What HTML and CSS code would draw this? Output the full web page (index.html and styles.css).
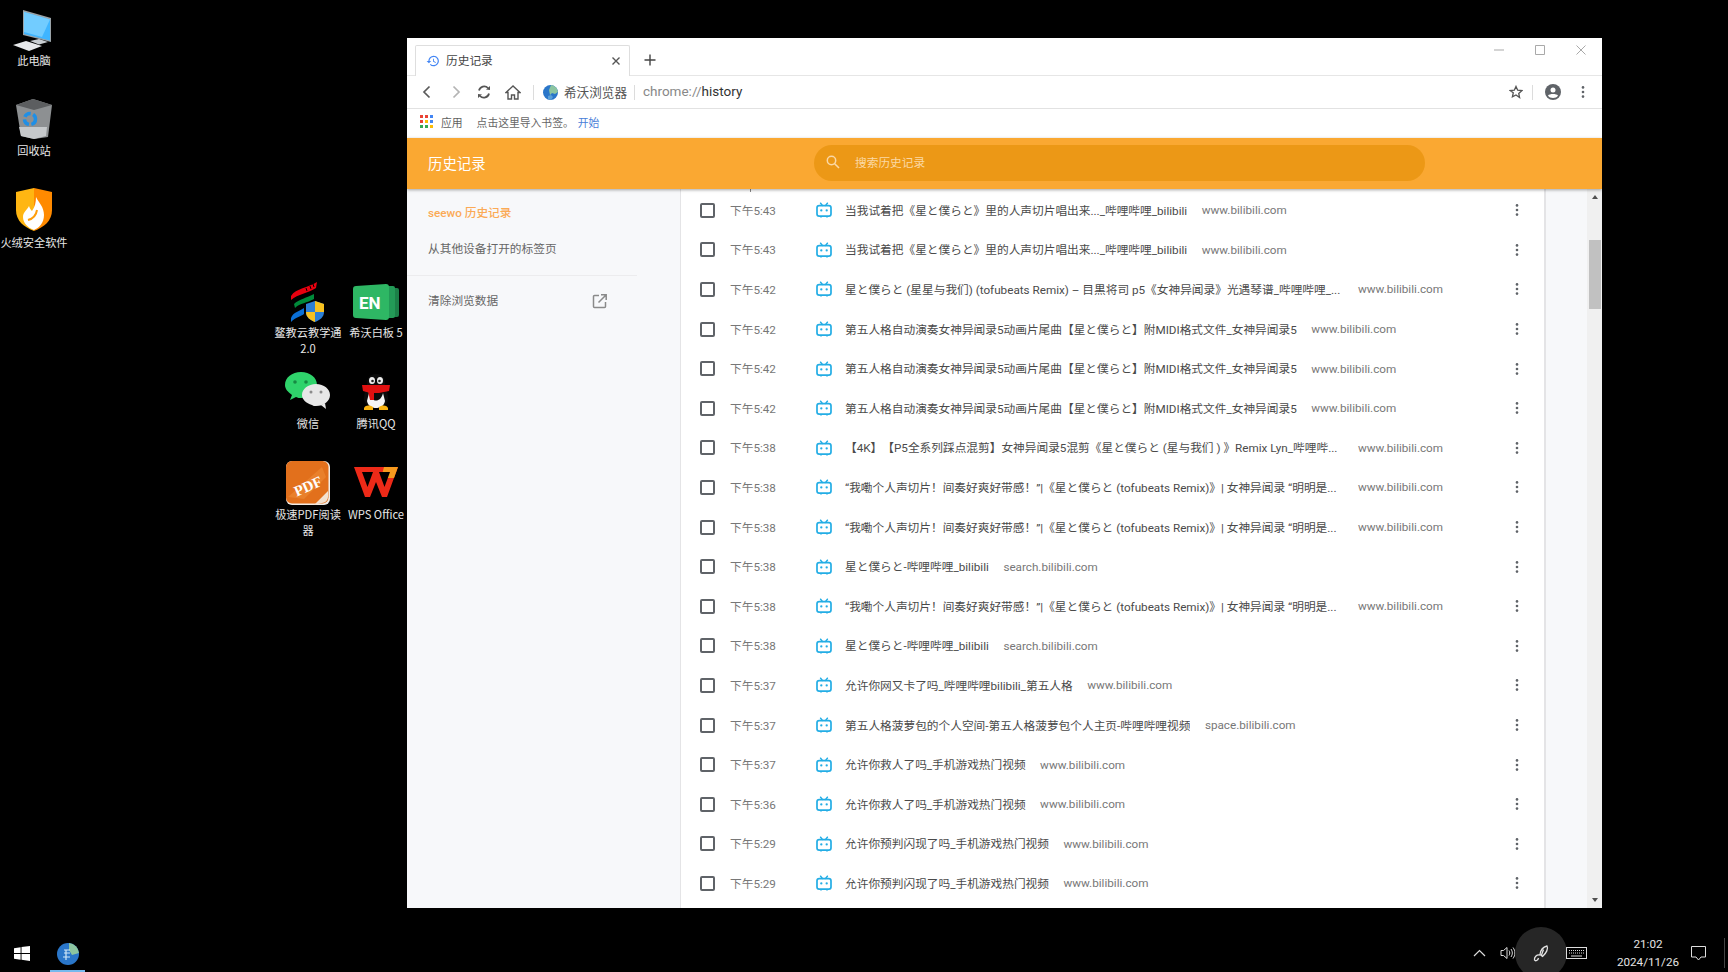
FILE: index.html
```html
<!DOCTYPE html>
<html lang="zh-CN">
<head>
<meta charset="utf-8">
<title>历史记录</title>
<link rel="stylesheet" href="styles.css">
</head>
<body>
<svg class="defs" width="0" height="0" aria-hidden="true">
  <symbol id="bili" viewBox="0 0 16 16">
    <path d="M4.6 1.2 6.4 3.4M11.4 1.2 9.6 3.4" stroke="#23ade5" stroke-width="1.5" stroke-linecap="round" fill="none"/>
    <rect x="1" y="3.6" width="14" height="10.6" rx="2.2" fill="none" stroke="#23ade5" stroke-width="1.7"/>
    <circle cx="5.3" cy="8.4" r="1.15" fill="#23ade5"/><circle cx="10.7" cy="8.4" r="1.15" fill="#23ade5"/>
    <path d="M4.2 15h1.6M10.2 15h1.6" stroke="#23ade5" stroke-width="1.2"/>
  </symbol>
  <symbol id="dots" viewBox="0 0 4 14">
    <circle cx="2" cy="2.4" r="1.3" fill="#5f6368"/><circle cx="2" cy="7" r="1.3" fill="#5f6368"/><circle cx="2" cy="11.6" r="1.3" fill="#5f6368"/>
  </symbol>
</svg>

<main class="desktop">
  <div class="dicon d-pc">
    <svg class="dsvg" width="44" height="42" viewBox="0 0 44 42"><path d="M11 0 39 8v24l-28-7z" fill="#9aa3a8"/><path d="M12 2 38 9.500v21l-26-6.500z" fill="#3fb5ff"/><path d="M12 2 38 9.500 30 27 12 22z" fill="#72ccff"/><path d="M18 31l9-2 9 3-9 2.500z" fill="#c9ced2"/><path d="M1 35l13-4 16 5-13 5z" fill="#e6e8ea"/></svg>
    <span class="dlabel l-pc">此电脑</span>
  </div>
  <div class="dicon d-bin">
    <svg class="dsvg" width="38" height="40" viewBox="0 0 38 40"><path d="M1 6l17-6 19 6-4 32-14 2-13-3z" fill="#8d9092"/><path d="M1 6l17-6 19 6-18 5z" fill="#5c5e60"/><path d="M4 28l28 0-1 9-12 3-13-3z" fill="#c6c9cb"/><circle cx="15" cy="20" r="5.500" fill="none" stroke="#1f8fe6" stroke-width="3.500" stroke-dasharray="7 2.500"/></svg>
    <span class="dlabel l-bin">回收站</span>
  </div>
  <div class="dicon d-fire">
    <svg class="dsvg" width="38" height="44" viewBox="0 0 38 44"><path d="M1 4 19 0v43C9 39 1 33 1 22z" fill="#ffb612"/><path d="M19 0 37 4v18c0 11-8 17-18 21z" fill="#ff8a00"/><path d="M21 9c3 6 8 10 8 18 0 8-5 13-10 15-6-2-11-7-11-13 0-5 4-7 6-11 1 3 2 4 3 5 3-4 4-9 4-14z" fill="#fff"/><path d="M13 32c4-1 8-4 9-10" stroke="#ff9d0a" stroke-width="2" fill="none"/></svg>
    <span class="dlabel l-fire">火绒安全软件</span>
  </div>
  <div class="dicon d-ao">
    <svg class="dsvg" width="36" height="40" viewBox="0 0 36 40"><path d="M1 14C6 6 18 6 27 0l-1 6C18 11 8 12 1 18z" fill="#e8000f"/><path d="M16 6l1 3M20 4l1 3M23 2l1 3" stroke="#000" stroke-width="1"/><path d="M4 22c5-5 13-6 20-10v5c-7 4-14 4-19 9z" fill="#008a3a"/><path d="M1 36c2-6 9-7 13-10v6c-4 3-8 3-13 8z" fill="#0a6fd6"/><path d="M16 22l9-3 9 3v8c0 5-4 8-9 10-5-2-9-5-9-10z" fill="#2d7fd6"/><path d="M25 19l9 3v8h-9zM16 30h9v10c-5-2-9-5-9-10z" fill="#f7c11f"/></svg>
    <span class="dlabel l-ao">鳌教云教学通<br>2.0</span>
  </div>
  <div class="dicon d-en">
    <svg class="dsvg" width="46" height="36" viewBox="0 0 46 36"><rect x="30" y="4" width="16" height="29" rx="2" fill="#1c7f48"/><rect x="26" y="2" width="16" height="32" rx="2" fill="#239a57"/><path d="M3 2 33 0a3 3 0 0 1 3 3v30a3 3 0 0 1-3 3L3 34a3 3 0 0 1-3-3V5a3 3 0 0 1 3-3z" fill="#2eb764"/><text x="6" y="25" class="entext">EN</text></svg>
    <span class="dlabel l-en">希沃白板 5</span>
  </div>
  <div class="dicon d-wx">
    <svg class="dsvg" width="46" height="38" viewBox="0 0 46 38"><path d="M16 0c9 0 16 5.500 16 13s-7 13-16 13c-2 0-3 0-5-1l-6 3 2-5C3 20 0 17 0 13 0 5.500 7 0 16 0z" fill="#2fd36b"/><circle cx="10" cy="10" r="1.800" fill="#178a43"/><circle cx="21" cy="10" r="1.800" fill="#178a43"/><path d="M31 12c8 0 14 5 14 11s-6 11-14 11c-1.500 0-3 0-4-1l-0 0c-6-2-10-5.500-10-10 0-6 6-11 14-11z" fill="#e7e7e7"/><path d="M36 33l5 4-1-6z" fill="#e7e7e7"/><circle cx="26" cy="20" r="1.500" fill="#8b8b8b"/><circle cx="36" cy="20" r="1.500" fill="#8b8b8b"/></svg>
    <span class="dlabel l-wx">微信</span>
  </div>
  <div class="dicon d-qq">
    <svg class="dsvg" width="30" height="36" viewBox="0 0 30 36"><path d="M15 0c6 0 9 4 9 10 0 2 1 3 2 6l1 8c0 6-5 10-12 10S3 30 3 24l1-8c1-3 2-4 2-6 0-6 3-10 9-10z" fill="#0b0b0b"/><path d="M8 19c2 10 12 10 14 0l2 8c-1 5-5 7-9 7s-8-2-9-7z" fill="#f5f5f5"/><ellipse cx="11" cy="6.500" rx="3" ry="3.500" fill="#eee"/><ellipse cx="19" cy="6.500" rx="3" ry="3.500" fill="#eee"/><circle cx="11.500" cy="7" r="1.300" fill="#222"/><circle cx="18.500" cy="7" r="1.300" fill="#222"/><path d="M1 11h28l-1 6-10 2H9L2 17z" fill="#e01010"/><path d="M7 17h6v9H9z" fill="#e01010"/><path d="M3 34c2-3 5-3 9-1v3H3zM27 34c-2-3-5-3-9-1v3h9z" fill="#f9b310"/></svg>
    <span class="dlabel l-qq">腾讯QQ</span>
  </div>
  <div class="dicon d-pdf">
    <svg class="dsvg" width="44" height="44" viewBox="0 0 44 44"><rect width="44" height="44" rx="6" fill="#f1ece6"/><rect width="42.500" height="42.500" rx="6" fill="#e2701c"/><path d="M28 44l14-14v6a6 6 0 0 1-6 6z" fill="#f3e1cf"/><path d="M2 36 36 6l4 10-22 22z" fill="#f08f3a" opacity=".5"/><text x="6" y="30" class="pdftext" transform="rotate(-24 22 22)">PDF</text></svg>
    <span class="dlabel l-pdf">极速PDF阅读<br>器</span>
  </div>
  <div class="dicon d-wps">
    <svg class="dsvg" width="44" height="32" viewBox="0 0 44 32"><path d="M0 0h44L33 30h-5L22 15l-6 15h-5z" fill="#ee2a18"/><path d="M30 0h14l-4 11H27z" fill="#f79a1e"/><path d="M8 5h11l-5.500 15zM25 5h11l-5.500 15z" fill="#000"/></svg>
    <span class="dlabel l-wps">WPS Office</span>
  </div>

  <section class="window">
    <header class="tabstrip">
      <div class="tab">
        <svg class="tab-ico" width="14" height="14" viewBox="0 0 24 24"><path d="M13 3a9 9 0 0 0-9 9H1l4 4 4-4H6a7 7 0 1 1 2.100 5L6.700 18.400A9 9 0 1 0 13 3zm-1 5v5l4.300 2.500.7-1.200-3.500-2.100V8z" fill="#4285f4"/></svg>
        <span class="tab-title">历史记录</span>
        <svg class="tab-close" width="10" height="10" viewBox="0 0 10 10"><path d="M1.500 1.500l7 7m0-7-7 7" stroke="#555" stroke-width="1.400"/></svg>
      </div>
      <svg class="newtab" width="12" height="12" viewBox="0 0 12 12"><path d="M6 .5v11M.5 6h11" stroke="#444" stroke-width="1.400"/></svg>
      <div class="winctl">
        <svg width="10" height="10" viewBox="0 0 10 10"><path d="M0 5h10" stroke="#a9a9a9"/></svg>
        <svg width="10" height="10" viewBox="0 0 10 10"><path d="M.5.500h9v9h-9z" fill="none" stroke="#a9a9a9"/></svg>
        <svg width="10" height="10" viewBox="0 0 10 10"><path d="M.5.500l9 9m0-9-9 9" stroke="#a9a9a9"/></svg>
      </div>
    </header>

    <nav class="toolbar">
      <svg class="tb-back" width="9" height="14" viewBox="0 0 9 14"><path d="M7.500 1.500 2 7l5.500 5.500" fill="none" stroke="#5a5a5a" stroke-width="1.700"/></svg>
      <svg class="tb-fwd" width="9" height="14" viewBox="0 0 9 14"><path d="M1.500 1.500 7 7l-5.500 5.500" fill="none" stroke="#b4b4b4" stroke-width="1.700"/></svg>
      <svg class="tb-reload" width="14" height="14" viewBox="0 0 14 14"><path d="M2 5.500A5.300 5.300 0 0 1 11 3M12 8.500A5.300 5.300 0 0 1 3 11" fill="none" stroke="#555" stroke-width="1.800"/><path d="M9 4.500 13 1v4zM5 9.500 1 13V9z" fill="#555"/></svg>
      <svg class="tb-home" width="16" height="15" viewBox="0 0 16 15"><path d="M8 1 1 7.500h2V14h3.500v-4h3v4H13V7.500h2z" fill="none" stroke="#555" stroke-width="1.400"/></svg>
      <i class="vline v1"></i>
      <svg class="tb-globe" width="15" height="15" viewBox="0 0 15 15"><circle cx="7.500" cy="7.500" r="7.500" fill="#2a76c9"/><path d="M8 0a7.500 7.500 0 0 1 7 7l-3 2-3-1-2 2-1-5z" fill="#8cc5a0"/><path d="M5 11l3-1 2 2-2 3-3-1z" fill="#5aa0d8"/></svg>
      <span class="brand">希沃浏览器</span>
      <i class="vline v2"></i>
      <span class="url"><span class="url-dim">chrome://</span>history</span>
      <svg class="tb-star" width="14" height="14" viewBox="0 0 24 24"><path d="M12 2.500l2.900 6.400 7 .8-5.200 4.700 1.400 6.900L12 17l-6.100 3.300 1.400-6.900L2.100 9.700l7-.8z" fill="none" stroke="#555" stroke-width="2.300"/></svg>
      <i class="vline v3"></i>
      <svg class="tb-acct" width="16" height="16" viewBox="0 0 16 16"><circle cx="8" cy="8" r="8" fill="#5f6368"/><circle cx="8" cy="6" r="2.500" fill="#fff"/><path d="M3 11.600c1.500-2 8.500-2 10 0C12 13.400 10 14 8 14s-4-.6-5-2.400z" fill="#fff"/></svg>
      <svg class="tb-dots" width="4" height="14"><use href="#dots"/></svg>
    </nav>

    <div class="bookmarks">
      <svg class="apps" width="13" height="13" viewBox="0 0 13 13">
        <rect width="3" height="3" fill="#ea4335"/><rect x="5" width="3" height="3" fill="#ea4335"/><rect x="10" width="3" height="3" fill="#4285f4"/>
        <rect y="5" width="3" height="3" fill="#ea4335"/><rect x="5" y="5" width="3" height="3" fill="#fbbc05"/><rect x="10" y="5" width="3" height="3" fill="#4285f4"/>
        <rect y="10" width="3" height="3" fill="#34a853"/><rect x="5" y="10" width="3" height="3" fill="#34a853"/><rect x="10" y="10" width="3" height="3" fill="#fbbc05"/>
      </svg>
      <span class="bm-apps">应用</span>
      <span class="bm-hint">点击这里导入书签。</span>
      <span class="bm-link">开始</span>
    </div>

    <header class="hist-head">
      <h1 class="hist-title">历史记录</h1>
      <div class="search">
        <svg width="14" height="14" viewBox="0 0 14 14"><circle cx="5.500" cy="5.500" r="4.200" fill="none" stroke="#fbd8a5" stroke-width="1.500"/><path d="M8.700 8.700 13 13" stroke="#fbd8a5" stroke-width="1.600"/></svg>
        <span class="search-ph">搜索历史记录</span>
      </div>
    </header>

    <div class="hist-body">
      <aside class="side">
        <div class="side-item side-on">seewo 历史记录</div>
        <div class="side-item side-second">从其他设备打开的标签页</div>
        <div class="side-rule"></div>
        <div class="side-item side-clear">
          <span>清除浏览数据</span>
          <svg width="15" height="15" viewBox="0 0 15 15"><path d="M7 1.500H2.500a1 1 0 0 0-1 1v10a1 1 0 0 0 1 1h10a1 1 0 0 0 1-1V8" fill="none" stroke="#8a8a8a" stroke-width="1.500"/><path d="M9 .8h5.200V6M14 1 6.500 8.500" fill="none" stroke="#8a8a8a" stroke-width="1.500"/></svg>
        </div>
      </aside>

      <div class="card">
        <i class="clip-tick"></i>
        <div class="row"><i class="cb"></i><span class="time">下午5:43</span><svg class="fav"><use href="#bili"/></svg><span class="title">当我试着把《星と僕らと》里的人声切片唱出来..._哔哩哔哩_bilibili</span><span class="domain">www.bilibili.com</span><svg class="more"><use href="#dots"/></svg></div>
        <div class="row"><i class="cb"></i><span class="time">下午5:43</span><svg class="fav"><use href="#bili"/></svg><span class="title">当我试着把《星と僕らと》里的人声切片唱出来..._哔哩哔哩_bilibili</span><span class="domain">www.bilibili.com</span><svg class="more"><use href="#dots"/></svg></div>
        <div class="row"><i class="cb"></i><span class="time">下午5:42</span><svg class="fav"><use href="#bili"/></svg><span class="title trunc">星と僕らと (星星与我们) (tofubeats Remix) – 目黒将司 p5《女神异闻录》光遇琴谱_哔哩哔哩_...</span><span class="domain">www.bilibili.com</span><svg class="more"><use href="#dots"/></svg></div>
        <div class="row"><i class="cb"></i><span class="time">下午5:42</span><svg class="fav"><use href="#bili"/></svg><span class="title">第五人格自动演奏女神异闻录5动画片尾曲【星と僕らと】附MIDI格式文件_女神异闻录5</span><span class="domain">www.bilibili.com</span><svg class="more"><use href="#dots"/></svg></div>
        <div class="row"><i class="cb"></i><span class="time">下午5:42</span><svg class="fav"><use href="#bili"/></svg><span class="title">第五人格自动演奏女神异闻录5动画片尾曲【星と僕らと】附MIDI格式文件_女神异闻录5</span><span class="domain">www.bilibili.com</span><svg class="more"><use href="#dots"/></svg></div>
        <div class="row"><i class="cb"></i><span class="time">下午5:42</span><svg class="fav"><use href="#bili"/></svg><span class="title">第五人格自动演奏女神异闻录5动画片尾曲【星と僕らと】附MIDI格式文件_女神异闻录5</span><span class="domain">www.bilibili.com</span><svg class="more"><use href="#dots"/></svg></div>
        <div class="row"><i class="cb"></i><span class="time">下午5:38</span><svg class="fav"><use href="#bili"/></svg><span class="title trunc">【4K】【P5全系列踩点混剪】女神异闻录5混剪《星と僕らと (星与我们 ) 》Remix Lyn_哔哩哔...</span><span class="domain">www.bilibili.com</span><svg class="more"><use href="#dots"/></svg></div>
        <div class="row"><i class="cb"></i><span class="time">下午5:38</span><svg class="fav"><use href="#bili"/></svg><span class="title trunc">“我嘞个人声切片！间奏好爽好带感！”|《星と僕らと (tofubeats Remix)》| 女神异闻录 “明明是...</span><span class="domain">www.bilibili.com</span><svg class="more"><use href="#dots"/></svg></div>
        <div class="row"><i class="cb"></i><span class="time">下午5:38</span><svg class="fav"><use href="#bili"/></svg><span class="title trunc">“我嘞个人声切片！间奏好爽好带感！”|《星と僕らと (tofubeats Remix)》| 女神异闻录 “明明是...</span><span class="domain">www.bilibili.com</span><svg class="more"><use href="#dots"/></svg></div>
        <div class="row"><i class="cb"></i><span class="time">下午5:38</span><svg class="fav"><use href="#bili"/></svg><span class="title">星と僕らと-哔哩哔哩_bilibili</span><span class="domain">search.bilibili.com</span><svg class="more"><use href="#dots"/></svg></div>
        <div class="row"><i class="cb"></i><span class="time">下午5:38</span><svg class="fav"><use href="#bili"/></svg><span class="title trunc">“我嘞个人声切片！间奏好爽好带感！”|《星と僕らと (tofubeats Remix)》| 女神异闻录 “明明是...</span><span class="domain">www.bilibili.com</span><svg class="more"><use href="#dots"/></svg></div>
        <div class="row"><i class="cb"></i><span class="time">下午5:38</span><svg class="fav"><use href="#bili"/></svg><span class="title">星と僕らと-哔哩哔哩_bilibili</span><span class="domain">search.bilibili.com</span><svg class="more"><use href="#dots"/></svg></div>
        <div class="row"><i class="cb"></i><span class="time">下午5:37</span><svg class="fav"><use href="#bili"/></svg><span class="title">允许你网又卡了吗_哔哩哔哩bilibili_第五人格</span><span class="domain">www.bilibili.com</span><svg class="more"><use href="#dots"/></svg></div>
        <div class="row"><i class="cb"></i><span class="time">下午5:37</span><svg class="fav"><use href="#bili"/></svg><span class="title">第五人格菠萝包的个人空间-第五人格菠萝包个人主页-哔哩哔哩视频</span><span class="domain">space.bilibili.com</span><svg class="more"><use href="#dots"/></svg></div>
        <div class="row"><i class="cb"></i><span class="time">下午5:37</span><svg class="fav"><use href="#bili"/></svg><span class="title">允许你救人了吗_手机游戏热门视频</span><span class="domain">www.bilibili.com</span><svg class="more"><use href="#dots"/></svg></div>
        <div class="row"><i class="cb"></i><span class="time">下午5:36</span><svg class="fav"><use href="#bili"/></svg><span class="title">允许你救人了吗_手机游戏热门视频</span><span class="domain">www.bilibili.com</span><svg class="more"><use href="#dots"/></svg></div>
        <div class="row"><i class="cb"></i><span class="time">下午5:29</span><svg class="fav"><use href="#bili"/></svg><span class="title">允许你预判闪现了吗_手机游戏热门视频</span><span class="domain">www.bilibili.com</span><svg class="more"><use href="#dots"/></svg></div>
        <div class="row"><i class="cb"></i><span class="time">下午5:29</span><svg class="fav"><use href="#bili"/></svg><span class="title">允许你预判闪现了吗_手机游戏热门视频</span><span class="domain">www.bilibili.com</span><svg class="more"><use href="#dots"/></svg></div>
      </div>

      <div class="gutter"></div>
      <div class="scrollbar">
        <i class="arrow-up"></i>
        <i class="thumb"></i>
        <i class="arrow-down"></i>
      </div>
    </div>
  </section>
</main>

<footer class="taskbar">
  <svg class="start" width="16" height="15" viewBox="0 0 16 15"><path d="M0 2.200 6.600 1.200v5.900H0zM7.500 1.100 16 0v7.100H7.500zM0 7.900h6.600v5.900L0 12.800zM7.500 7.900H16V15l-8.500-1.200z" fill="#fff"/></svg>
  <div class="task-app">
    <svg width="22" height="22" viewBox="0 0 22 22"><circle cx="11" cy="11" r="11" fill="#2a76c9"/><path d="M12 0a11 11 0 0 1 10 10l-7 2-3-5z" fill="#8cc5a0"/><path d="M7 7h6M7 10h6M6 14h7M9 7v10" stroke="#cfe6f7" stroke-width="1.200"/></svg>
  </div>
  <div class="tray">
    <svg class="t-chev" width="13" height="8" viewBox="0 0 13 8"><path d="M1 7l5.500-5.500L12 7" fill="none" stroke="#ddd" stroke-width="1.200"/></svg>
    <svg class="t-vol" width="16" height="14" viewBox="0 0 16 14"><path d="M1 4.500h2.500L7 1.500v11l-3.500-3H1z" fill="none" stroke="#ddd"/><path d="M9 4.500c1 1.500 1 3.500 0 5M11 3c1.800 2.500 1.800 5.500 0 8M13 1.500c2.500 3.500 2.500 7.500 0 11" fill="none" stroke="#ddd"/></svg>
    <div class="t-pen">
      <svg width="16" height="17" viewBox="0 0 16 17"><path d="M14 1c1.500 2.500-.5 7-4.500 10.500L7 9.500C7.500 5.500 10 2 14 1zM10.500 4.500 8.500 10" fill="none" stroke="#e4e4e4" stroke-width="1.300"/><path d="M7 10C3.500 9.500 1 12 1.500 15c1 1.500 3.500.5 4-2" fill="none" stroke="#e4e4e4" stroke-width="1.300"/></svg>
    </div>
    <svg class="t-kbd" width="21" height="12" viewBox="0 0 21 12"><rect x=".5" y=".5" width="20" height="11" fill="none" stroke="#ddd"/><path d="M3 3.500h15M3 6h15" stroke="#ddd" stroke-dasharray="1 1"/><path d="M5 9h11" stroke="#ddd"/></svg>
    <div class="clock"><span>21:02</span><span>2024/11/26</span></div>
    <svg class="t-note" width="15" height="15" viewBox="0 0 15 15"><path d="M.5.500h14v10.500H10l-2.500 3L5 11H.5z" fill="none" stroke="#ddd"/></svg>
    <i class="t-edge"></i>
  </div>
</footer>
</body>
</html>
```

FILE: styles.css
```css
* { box-sizing: border-box; }
html, body { margin: 0; padding: 0; }
body {
  width: 1728px; height: 972px; background: #000; overflow: hidden;
  display: flex; flex-direction: column;
  font-family: Roboto, "Noto Sans CJK SC", sans-serif;
  font-size: 11.7px; color: #5f6368;
  text-spacing-trim: space-all;
}
i { display: block; font-style: normal; }
.defs { position: absolute; }

/* desktop canvas */
.desktop { flex: 1; position: relative; min-height: 0; }
.dicon { position: absolute; width: 76px; height: 90px; }
.dsvg { position: absolute; left: 50%; transform: translateX(-50%); }
.dlabel {
  position: absolute; left: -4px; right: -4px; text-align: center;
  color: #e6e6e6; font: 11.2px/16px "Noto Sans CJK SC", Roboto, sans-serif;
}
.d-pc { left: -4px; top: 10px; } .l-pc { top: 42px; }
.d-bin { left: -4px; top: 99px; } .l-bin { top: 43px; }
.d-fire { left: -4px; top: 188px; } .l-fire { top: 46px; }
.d-ao { left: 270px; top: 282px; } .l-ao { top: 42px; }
.d-en { left: 338px; top: 284px; } .l-en { top: 40px; }
.d-wx { left: 270px; top: 372px; } .l-wx { top: 43px; }
.d-qq { left: 338px; top: 374px; } .l-qq { top: 41px; }
.d-pdf { left: 270px; top: 461px; } .l-pdf { top: 45px; }
.d-wps { left: 338px; top: 467px; } .l-wps { top: 39px; }
.entext { font: 700 17px Roboto, sans-serif; fill: #fff; }
.pdftext { font: 700 15px "Liberation Serif", serif; fill: #fff; }

/* browser window */
.window {
  position: absolute; left: 407px; top: 38px; width: 1195px; height: 870px;
  background: #fff; display: flex; flex-direction: column; overflow: hidden;
}
.tabstrip {
  height: 38px; flex: none; display: flex; align-items: flex-end;
  padding-left: 8px; border-bottom: 1px solid #e6e6e6;
}
.tab {
  width: 215px; height: 31px; margin-bottom: -1px; background: #fff;
  border: 1px solid #dedede; border-bottom: 0; border-top-left-radius: 2px; border-top-right-radius: 2px;
  display: flex; align-items: center; padding: 0 8px 0 10px;
  font-size: 11.7px; color: #444;
}
.tab-title { margin: 0 0 3px 6px; font-family: "Noto Sans CJK SC", sans-serif; flex: 1; }
.newtab { margin: 0 0 9px 14px; }
.winctl { margin-left: auto; display: flex; gap: 31px; padding: 0 16px 20px 0; }

.toolbar {
  height: 33px; flex: none; display: flex; align-items: center;
  padding-left: 15px; border-bottom: 1px solid #e2e2e2;
}
.tb-fwd { margin-left: 21px; }
.tb-reload { margin-left: 16px; }
.tb-home { margin-left: 14px; }
.vline { width: 1px; height: 15px; background: #dcdcdc; }
.v1 { margin-left: 12px; }
.tb-globe { margin-left: 9px; }
.brand { margin: 0 0 2px 6px; color: #555; font: 12.6px "Noto Sans CJK SC", sans-serif; }
.v2 { margin-left: 7px; }
.url { margin: 0 0 2px 8px; font: 13.5px Roboto, sans-serif; color: #333; }
.url-dim { color: #888; }
.tb-star { margin-left: auto; }
.v3 { margin-left: 9px; }
.tb-acct { margin-left: 12px; }
.tb-dots { margin: 0 17px 0 20px; }

.bookmarks {
  height: 29px; flex: none; display: flex; align-items: center; padding: 0 0 4px 13px;
  font-family: "Noto Sans CJK SC", sans-serif; font-size: 10.8px; color: #5f5f5f;
}
.bm-apps { margin-left: 8px; }
.bm-hint { margin-left: 14px; color: #666; }
.bm-link { margin-left: 4px; color: #4a80d8; }

.hist-head {
  height: 51px; flex: none; background: #faa832; display: flex; align-items: center;
  padding: 0 0 2px 21px; position: relative; z-index: 2;
  box-shadow: 0 1px 3px rgba(0,0,0,.35);
}
.hist-title { margin: 0; width: 386px; font: 400 14.4px "Noto Sans CJK SC", sans-serif; color: #fff; }
.search {
  width: 611px; height: 36px; border-radius: 18px; background: #ec9816;
  display: flex; align-items: center; padding: 0 0 2px 12px;
}
.search-ph { margin-left: 15px; color: #fbd8a5; font: 11.7px "Noto Sans CJK SC", sans-serif; }

.hist-body { flex: 1; min-height: 0; display: flex; background: #f7f8fa; }
.side { width: 273px; flex: none; font-family: Roboto, "Noto Sans CJK SC", sans-serif; }
.side-item { padding-left: 21px; line-height: 18px; color: #666; font-size: 11.7px; }
.side-on { margin-top: 15px; color: #fbaa55; font-weight: 500; }
.side-second { margin-top: 18px; }
.side-rule { margin-top: 17px; width: 230px; height: 1px; background: #ececee; }
.side-clear { margin-top: 16px; display: flex; align-items: center; justify-content: space-between; padding-right: 73px; }

.card {
  width: 866px; flex: none; background: #fff; position: relative;
  border-left: 1px solid #e4e4e6; border-right: 2px solid #e4e4e6;
  padding-top: 1.5px; overflow: hidden;
}
.clip-tick { position: absolute; left: 69px; top: 0; width: 1px; height: 3px; background: #888; }
.row {
  height: 39.6px; display: flex; align-items: center; padding-left: 19px; white-space: nowrap;
}
.cb { width: 15px; height: 15px; border: 2px solid #5f6368; border-radius: 2px; flex: none; }
.time { width: 86px; margin: 0 0 2px 15px; color: #777; flex: none; }
.fav { width: 16px; height: 16px; flex: none; }
.title { margin: 0 0 2px 13px; color: #4a4a4a; overflow: hidden; flex: none; }
.trunc { width: 498.5px; }
.domain { margin-left: 14.5px; color: #777; }
.more { width: 4px; height: 14px; flex: none; margin-left: auto; margin-right: 25px; }

.gutter { width: 41px; flex: none; }
.scrollbar { width: 15px; flex: none; background: #f0f0f0; display: flex; flex-direction: column; align-items: center; position: relative; }
.arrow-up { width: 0; height: 0; margin-top: 6px; border: 3.5px solid transparent; border-top: 0; border-bottom: 4px solid #505050; }
.thumb { width: 12px; height: 69px; margin-top: 41px; background: #c1c1c1; }
.arrow-down { width: 0; height: 0; margin-top: auto; margin-bottom: 6px; border: 3.5px solid transparent; border-bottom: 0; border-top: 4px solid #505050; }

/* taskbar */
.taskbar { height: 48px; flex: none; display: flex; align-items: center; background: #000; padding: 10px 0 0 14px; position: relative; }
.start { flex: none; }
.task-app {
  margin-left: 20px; width: 35px; height: 38px; padding-top: 3px; display: flex; align-items: center; justify-content: center;
  border-bottom: 2px solid #76b9ed;
}
.tray { margin-left: auto; display: flex; align-items: center; height: 38px; color: #e4e4e4; }
.t-chev { margin-right: 14px; }
.t-vol { margin-right: -1px; }
.t-pen {
  width: 52px; height: 52px; flex: none; border-radius: 50%; background: #262626;
  display: flex; align-items: center; justify-content: center;
}
.t-kbd { margin-left: -1px; }
.clock {
  width: 72px; margin-left: 25px; display: flex; flex-direction: column; align-items: center;
  font: 11.7px/18px Roboto, sans-serif;
}
.t-note { margin-left: 7px; }
.t-edge { width: 1px; height: 30px; background: #444; margin: 0 3px 0 18px; }
```
